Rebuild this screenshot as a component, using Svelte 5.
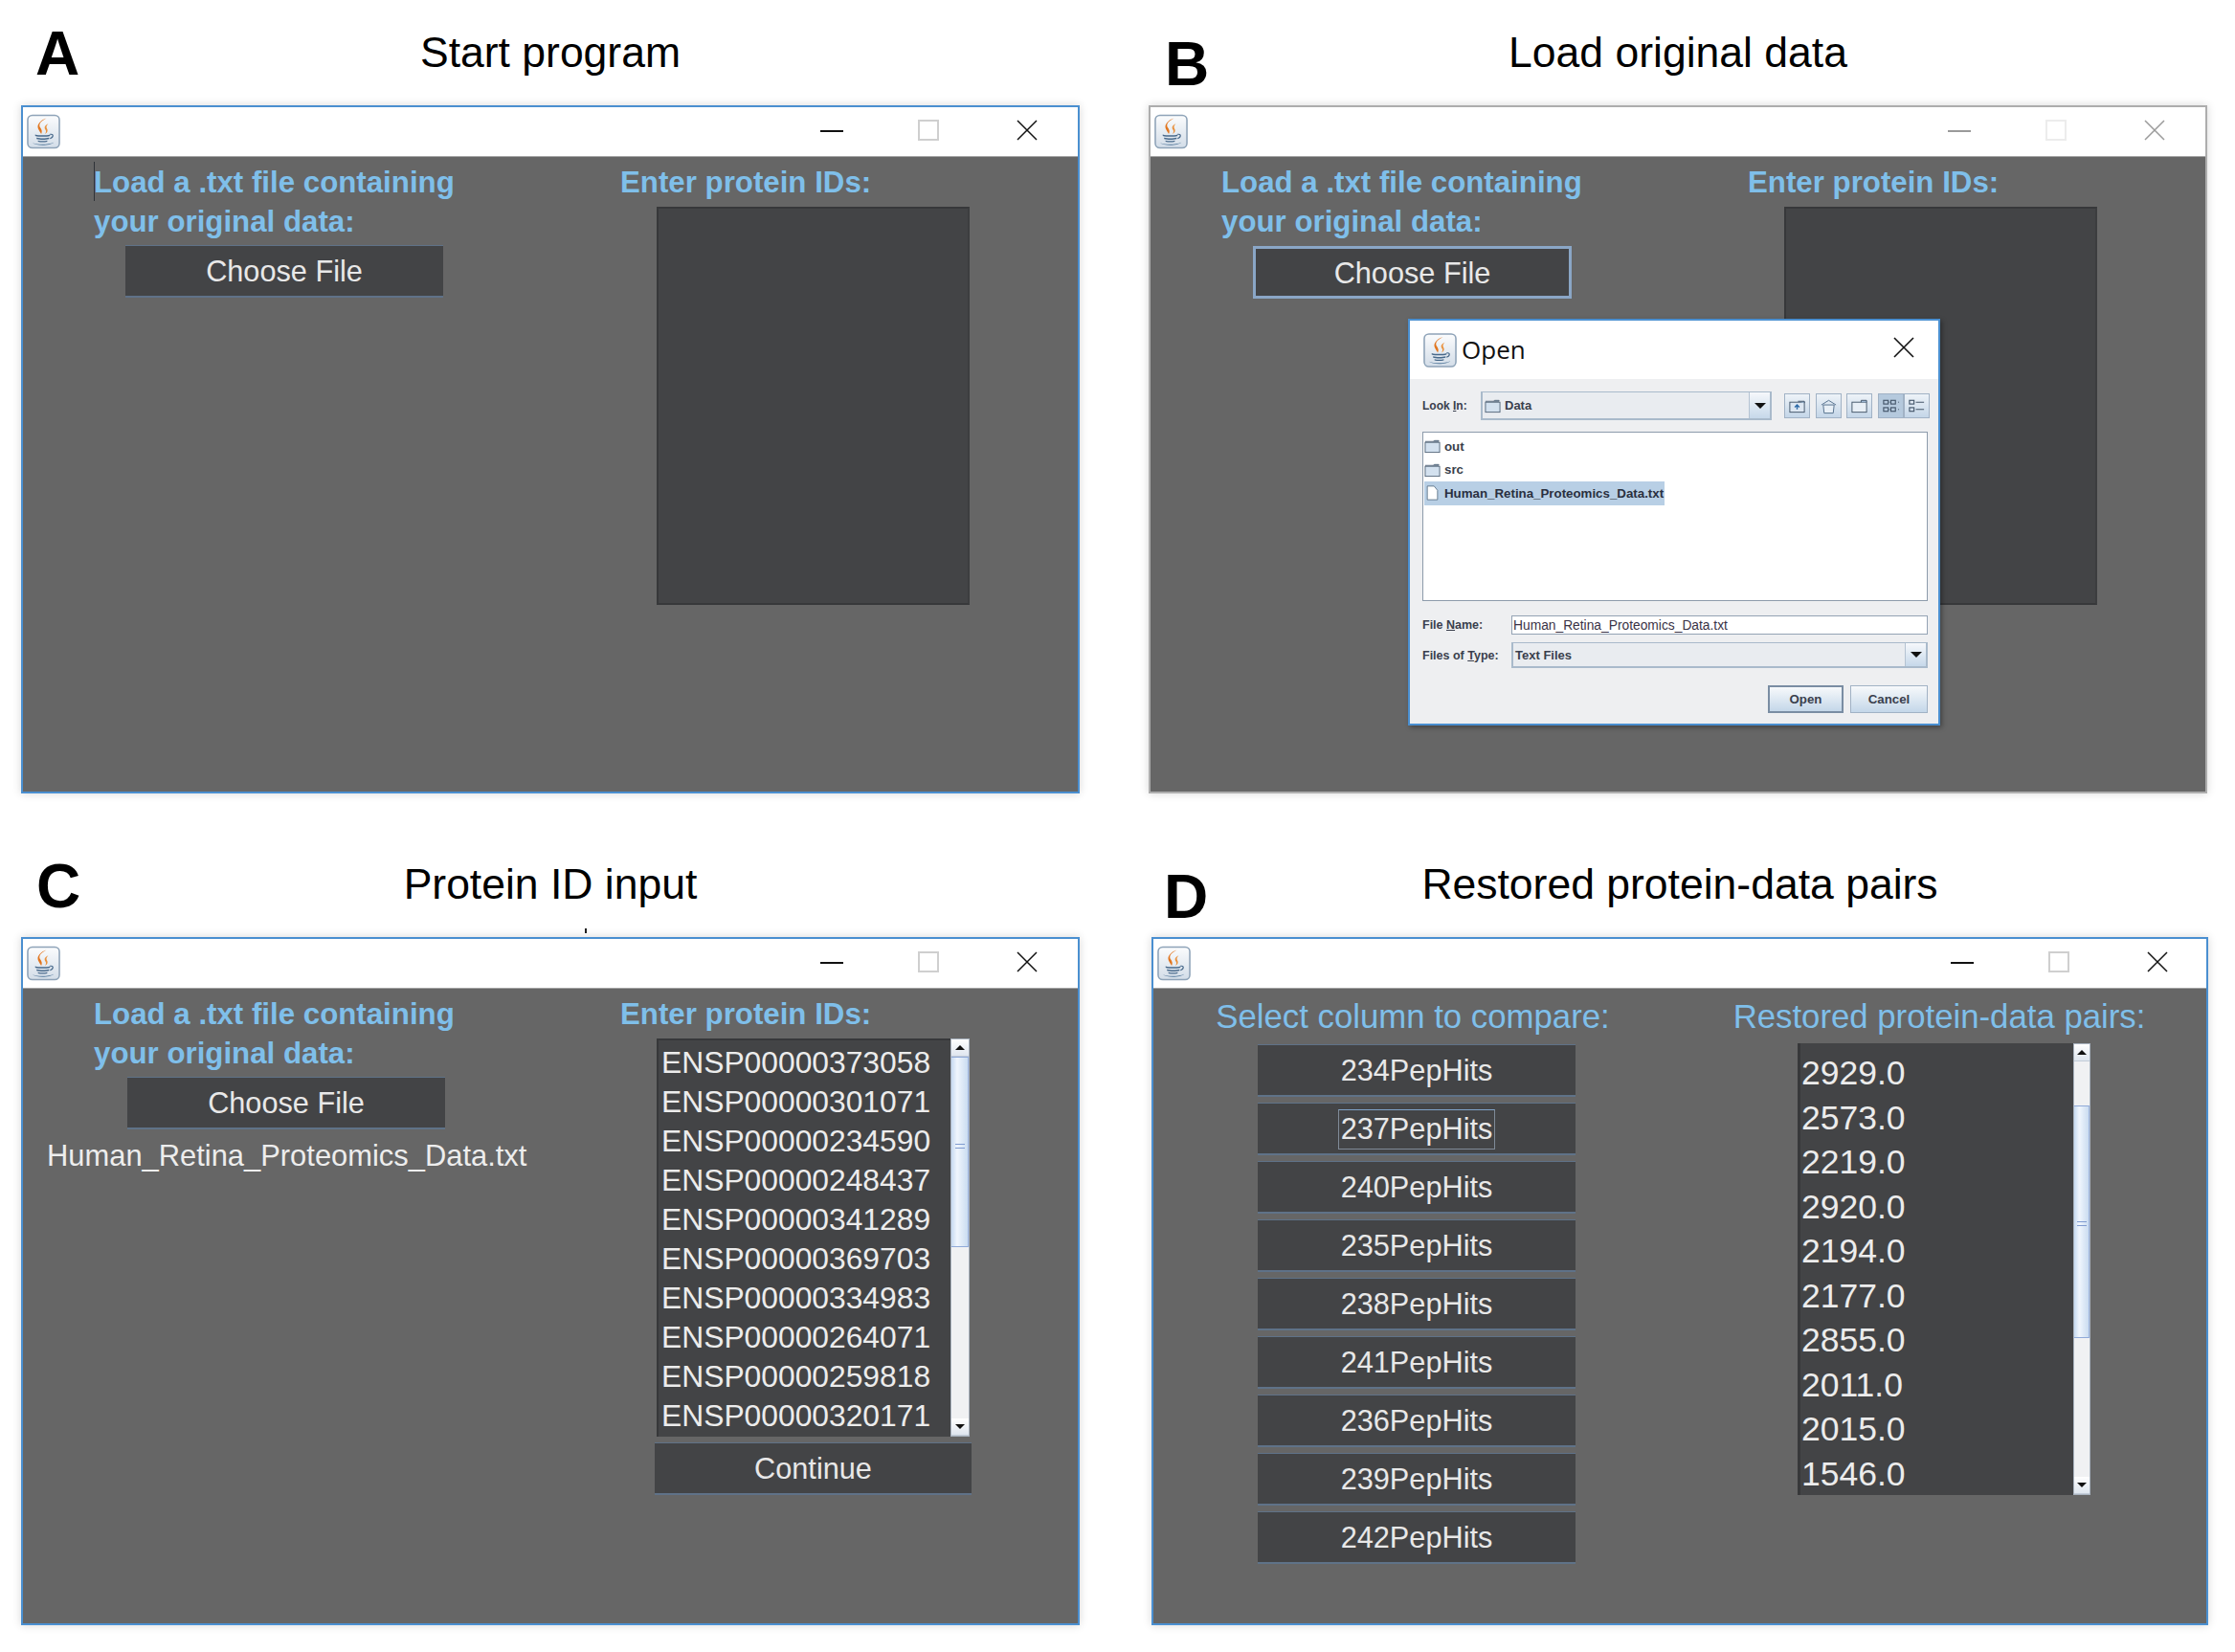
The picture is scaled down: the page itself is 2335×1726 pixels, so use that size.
<script>
	const proteinIds = [
		'ENSP00000373058',
		'ENSP00000301071',
		'ENSP00000234590',
		'ENSP00000248437',
		'ENSP00000341289',
		'ENSP00000369703',
		'ENSP00000334983',
		'ENSP00000264071',
		'ENSP00000259818',
		'ENSP00000320171'
	];
	const restored = ['2929.0', '2573.0', '2219.0', '2920.0', '2194.0', '2177.0', '2855.0', '2011.0', '2015.0', '1546.0'];
	const columns = ['234', '237', '240', '235', '238', '241', '236', '239', '242'];
	const focusedColumn = '237';
</script>

{#snippet javaIcon(cls)}
	<svg class={cls} viewBox="0 0 36 37" aria-hidden="true">
		<defs>
			<linearGradient id="jv-{cls}" x1="0" y1="0" x2="0" y2="1">
				<stop offset="0" stop-color="#fbfcfd" />
				<stop offset="1" stop-color="#d3dde8" />
			</linearGradient>
		</defs>
		<rect x="1" y="1" width="34" height="35" rx="5" fill="url(#jv-{cls})" stroke="#8ea3b8" stroke-width="1.6" />
		<path d="M21 4c-7 4-9 7-6 11 1.500 2.500 1.500 4 .5 6-2-4-6-7-2-12 1.500-2 4-4 7.500-5z" fill="#e2761f" />
		<path d="M23 10c-4 2-4.500 4-3 6.500 1 1.500.8 3-.5 4.500 3-1.500 3.500-3.500 2-6-1-1.500 0-3.500 1.500-5z" fill="#e9923f" />
		<path d="M9 21.500c4 1.300 12 1.300 16 0v1.500c-4 1.300-12 1.300-16 0zM10.500 25c3.500 1 10 1 13.500 0v1.400c-3.500 1-10 1-13.500 0zM12 28c3 .8 7 .8 10 0v1.300c-3 .8-7 .8-10 0z" fill="#47688a" />
		<path d="M25 21.500c3.500-1 4.500 2.500 0 4.500" fill="none" stroke="#47688a" stroke-width="1.200" />
		<path d="M6 30.500c6 2.200 17 2.200 23-.5-4 4-19 4-23 .5z" fill="#557a9c" />
	</svg>
{/snippet}

{#snippet titleBar(inactive)}
	<div class="titlebar" class:inactive>
		{@render javaIcon('app-icon')}
		<svg class="ctl min" viewBox="0 0 24 22" aria-hidden="true"><path d="M0 11h24" /></svg>
		<svg class="ctl max" viewBox="0 0 22 22" aria-hidden="true"><rect x="1" y="1" width="20" height="20" /></svg>
		<svg class="ctl close" viewBox="0 0 22 22" aria-hidden="true"><path d="M1 1l20 20M21 1L1 21" /></svg>
	</div>
{/snippet}

{#snippet scrollbar(thumbTop, thumbHeight, gripTop)}
	<div class="scrollbar">
		<div class="sb-btn"><span class="tri up"></span></div>
		<div class="sb-track">
			<div class="sb-thumb" style="margin-top:{thumbTop}px;height:{thumbHeight}px">
				<span class="sb-grip" style="margin-top:{gripTop}px"></span>
			</div>
		</div>
		<div class="sb-btn"><span class="tri down"></span></div>
	</div>
{/snippet}

{#snippet folder()}
	<svg class="tiny" viewBox="0 0 18 16" aria-hidden="true">
		<path d="M1 3h15v-1h-5l-1 1" fill="#b9cfe6" stroke="#56687b" />
		<rect x="1" y="4" width="16" height="11" fill="#d3e1ef" stroke="#56687b" />
	</svg>
{/snippet}

{#snippet loadColumn(cls)}
	<p class="label bold">Load a .txt file containing<br />your original data:</p>
	<button class="btn choose {cls}">Choose File</button>
{/snippet}

<main class="figure">
	<section class="panel">
		<header class="head">
			<span class="letter la">A</span>
			<h2>Start program</h2>
		</header>
		<div class="window">
			{@render titleBar(false)}
			<div class="body split">
				<div class="col-left">
					<span class="caret"></span>
					{@render loadColumn('')}
				</div>
				<div class="col-right">
					<p class="label bold">Enter protein IDs:</p>
					<div class="area empty"></div>
				</div>
			</div>
		</div>
	</section>

	<section class="panel">
		<header class="head">
			<span class="letter lb">B</span>
			<h2>Load original data</h2>
		</header>
		<div class="window inactive">
			{@render titleBar(true)}
			<div class="body split">
				<div class="col-left">
					{@render loadColumn('focused')}
				</div>
				<div class="col-right">
					<p class="label bold">Enter protein IDs:</p>
					<div class="area empty"></div>
				</div>
			</div>

			<div class="dialog">
				<div class="dlg-title">
					{@render javaIcon('dlg-icon')}
					<span class="dlg-name">Open</span>
					<svg class="dlg-close" viewBox="0 0 22 22" aria-hidden="true"><path d="M1 1l20 20M21 1L1 21" /></svg>
				</div>
				<div class="dlg-content">
					<div class="look-row">
						<span class="dlg-label look">Look <u>I</u>n:</span>
						<div class="combo look-combo">
							<span class="combo-value">{@render folder()} Data</span>
							<span class="combo-arrow"><span class="tri down big"></span></span>
						</div>
						<div class="tools">
							<button class="tool" aria-label="Up one level">
								<svg viewBox="0 0 20 18"><rect x="2" y="5" width="16" height="11" fill="#dde7f2" stroke="#44566a" /><path d="M10 13V8M7.500 10.500L10 8l2.500 2.500" fill="none" stroke="#2d6aa8" stroke-width="1.500" /><path d="M11 4h7v2" fill="#9db8d4" stroke="#44566a" /></svg>
							</button>
							<button class="tool" aria-label="Home">
								<svg viewBox="0 0 20 18"><path d="M2 8l8-5 8 5" fill="#dde7f2" stroke="#54708c" /><path d="M4 8h12l-1 9H5z" fill="#e8eff6" stroke="#54708c" /></svg>
							</button>
							<button class="tool" aria-label="New folder">
								<svg viewBox="0 0 20 18"><rect x="2" y="5" width="16" height="11" fill="#e8eff6" stroke="#44566a" /><path d="M12 5V3h6v2" fill="#9db8d4" stroke="#44566a" /></svg>
							</button>
							<div class="toggle">
								<button class="tool on" aria-label="List">
									<svg viewBox="0 0 20 18"><g fill="none" stroke="#44566a" stroke-width="1.200"><rect x="2" y="3" width="5" height="4" /><rect x="10" y="3" width="5" height="4" /><rect x="2" y="11" width="5" height="4" /><rect x="10" y="11" width="5" height="4" /></g><path d="M18 5h1M18 13h1M8 5h1M8 13h1" stroke="#44566a" /></svg>
								</button>
								<button class="tool" aria-label="Details">
									<svg viewBox="0 0 20 18"><g fill="none" stroke="#44566a" stroke-width="1.200"><rect x="2" y="3" width="5" height="4" /><rect x="2" y="11" width="5" height="4" /><path d="M9 5h9M9 13h9" /></g></svg>
								</button>
							</div>
						</div>
					</div>

					<div class="file-list">
						<div class="file-row">{@render folder()}<span>out</span></div>
						<div class="file-row">{@render folder()}<span>src</span></div>
						<div class="file-row selected">
							<svg class="tiny" viewBox="0 0 18 18" aria-hidden="true"><path d="M3 1h8l4 5v11H3z" fill="#fff" stroke="#5f7488" /></svg>
							<span>Human_Retina_Proteomics_Data.txt</span>
						</div>
					</div>

					<div class="name-row">
						<span class="dlg-label wide">File <u>N</u>ame:</span>
						<div class="name-input">Human_Retina_Proteomics_Data.txt</div>
					</div>
					<div class="type-row">
						<span class="dlg-label wide">Files of <u>T</u>ype:</span>
						<div class="combo type-combo">
							<span class="combo-value">Text Files</span>
							<span class="combo-arrow"><span class="tri down big"></span></span>
						</div>
					</div>
					<div class="dlg-actions">
						<button class="dlg-btn default">Open</button>
						<button class="dlg-btn">Cancel</button>
					</div>
				</div>
			</div>
		</div>
	</section>

	<section class="panel">
		<header class="head">
			<span class="letter lc">C</span>
			<h2>Protein ID input</h2>
			<span class="tick"></span>
		</header>
		<div class="window">
			{@render titleBar(false)}
			<div class="body split">
				<div class="col-left shift">
					{@render loadColumn('')}
					<p class="file-chosen">Human_Retina_Proteomics_Data.txt</p>
				</div>
				<div class="col-right">
					<p class="label bold">Enter protein IDs:</p>
					<div class="area with-scroll">
						<ul class="rows ids">
							{#each proteinIds as id}
								<li>{id}</li>
							{/each}
						</ul>
						{@render scrollbar(0, 199, 90)}
					</div>
					<button class="btn continue">Continue</button>
				</div>
			</div>
		</div>
	</section>

	<section class="panel last">
		<header class="head">
			<span class="letter ld">D</span>
			<h2>Restored protein-data pairs</h2>
		</header>
		<div class="window">
			{@render titleBar(false)}
			<div class="body pairs">
				<div class="pair-col">
					<p class="label large">Select column to compare:</p>
					<div class="col-buttons">
						{#each columns as c}
							<button class="btn column">
								<span class:focus-ring={c === focusedColumn}>{c}PepHits</span>
							</button>
						{/each}
					</div>
				</div>
				<div class="pair-col">
					<p class="label large">Restored protein-data pairs:</p>
					<div class="area with-scroll values">
						<ul class="rows vals">
							{#each restored as v}
								<li>{v}</li>
							{/each}
						</ul>
						{@render scrollbar(46, 243, 120)}
					</div>
				</div>
			</div>
		</div>
	</section>
</main>

<style>
	:global(body) {
		margin: 0;
		background: #fff;
	}

	.figure {
		width: 2335px;
		height: 1726px;
		box-sizing: border-box;
		padding-left: 22px;
		display: grid;
		grid-template-columns: 1106px 1106px;
		grid-template-rows: 829px 829px;
		column-gap: 72px;
		row-gap: 40px;
		font-family: 'Liberation Sans', Arial, sans-serif;
	}

	.panel.last {
		margin-left: 3px;
		margin-right: -1px;
	}

	.head {
		position: relative;
		height: 110px;
		display: grid;
		color: #000;
	}

	.letter,
	.head h2 {
		grid-area: 1 / 1;
	}

	.letter {
		justify-self: start;
		align-self: start;
		font-size: 64px;
		line-height: 1;
		font-weight: 700;
	}

	.la { margin: 24px 0 0 15px; }
	.lb { margin: 35px 0 0 17px; }
	.lc { margin: 25px 0 0 16px; }
	.ld { margin: 36px 0 0 13px; }

	.head h2 {
		justify-self: center;
		align-self: center;
		margin: 1px 0 0;
		font-size: 44.5px;
		font-weight: 400;
		line-height: 1;
	}

	.tick {
		position: absolute;
		left: 589px;
		top: 101px;
		width: 2px;
		height: 5px;
		background: #222;
	}

	.window {
		position: relative;
		height: 719px;
		box-sizing: border-box;
		border: 2px solid #4a8fd0;
		box-shadow: 0 0 9px rgba(0, 0, 0, 0.16);
		display: flex;
		flex-direction: column;
		background: #666;
	}

	.window.inactive {
		border: 2px solid #adadad;
	}

	.titlebar {
		height: 51px;
		flex: none;
		background: #fff;
		border-bottom: 1px solid #a5a5a5;
		display: flex;
		align-items: center;
		position: relative;
	}

	:global(.app-icon) {
		width: 35px;
		height: 37px;
		margin-left: 4px;
		flex: none;
	}

	.ctl {
		position: absolute;
		fill: none;
		stroke: #111;
		stroke-width: 1.5;
	}

	.ctl.min {
		left: 833px;
		top: 14px;
		width: 24px;
		height: 22px;
		stroke-width: 2;
	}

	.ctl.max {
		left: 935px;
		top: 13px;
		width: 22px;
		height: 22px;
		stroke: #cfcfcf;
		stroke-width: 2;
	}

	.ctl.close {
		left: 1038px;
		top: 13px;
		width: 22px;
		height: 22px;
	}

	.titlebar.inactive .ctl {
		stroke: #9a9a9a;
	}

	.titlebar.inactive .ctl.max {
		stroke: #ececec;
	}

	.body {
		flex: 1;
		color: #e8e8e8;
	}

	.split {
		display: grid;
		grid-template-columns: 624px 1fr;
	}

	.col-left {
		position: relative;
		padding: 6px 0 0 74px;
	}

	.col-left.shift .btn {
		margin-left: 35px;
	}

	.col-right {
		padding-top: 6px;
	}

	.label {
		margin: 0;
		color: #7fbfea;
		white-space: nowrap;
	}

	.label.bold {
		font-size: 31.25px;
		line-height: 41px;
		font-weight: 700;
	}

	.label.large {
		margin-left: -4px;
		font-size: 34.75px;
		line-height: 41px;
		text-align: center;
	}

	.caret {
		position: absolute;
		left: 74px;
		top: 5px;
		width: 1px;
		height: 41px;
		background: #2f3338;
	}

	.btn {
		display: block;
		padding: 2px 0 0;
		box-sizing: border-box;
		height: 55px;
		font-family: inherit;
		font-size: 30.7px;
		color: #e8e8e8;
		background: #434446;
		border: 0;
		border-top: 1px solid #5f7288;
		border-bottom: 2px solid #5f7288;
	}

	.btn.choose {
		width: 332px;
		margin: 4px 0 0 33px;
	}

	.btn.choose.focused {
		width: 333px;
		margin-top: 5px;
		border: 3px solid #8aa6c6;
	}

	.file-chosen {
		margin: 9px 0 0 -49px;
		font-size: 30.9px;
		line-height: 37px;
		color: #ededed;
		white-space: nowrap;
	}

	.area {
		margin: 5px 0 0 38px;
		width: 327px;
		height: 416px;
		box-sizing: border-box;
		background: #434446;
	}

	.area.empty {
		border: 2px solid #37383a;
		border-right-color: #3c3d3f;
	}

	.with-scroll {
		display: flex;
		overflow: hidden;
	}

	.rows {
		list-style: none;
		margin: 0;
		flex: 1;
		color: #ececec;
	}

	.rows.ids {
		padding: 3px 0 0 3px;
		font-size: 31.8px;
		line-height: 41px;
		border-top: 2px solid #37383a;
		border-left: 2px solid #37383a;
	}

	.rows.vals {
		padding: 8px 0 0 1px;
		font-size: 35.5px;
		line-height: 46.5px;
		border-left: 3px solid #37383a;
	}

	.scrollbar {
		width: 20px;
		flex: none;
		display: flex;
		flex-direction: column;
		background: #f0f1f3;
		border: 1px solid #a9b3bf;
		box-sizing: border-box;
	}

	.sb-btn {
		height: 17px;
		flex: none;
		display: flex;
		align-items: center;
		justify-content: center;
		background: linear-gradient(#fff, #dfe6ef);
		border-bottom: 1px solid #c3ccd8;
	}

	.sb-track {
		flex: 1;
		min-height: 0;
	}

	.sb-thumb {
		box-sizing: border-box;
		background: linear-gradient(90deg, #c7daf1, #f0f6fd 35%, #cadcf0);
		border-top: 1px solid #8fa9d8;
		border-bottom: 1px solid #8fa9d8;
		border-right: 1px solid #9db5df;
		display: flex;
		justify-content: center;
		align-items: flex-start;
	}

	.sb-grip {
		width: 10px;
		height: 3px;
		border-top: 1px solid #7f9bd0;
		border-bottom: 1px solid #7f9bd0;
	}

	.tri {
		width: 0;
		height: 0;
		border-left: 5px solid transparent;
		border-right: 5px solid transparent;
	}

	.tri.up {
		border-bottom: 5px solid #111;
	}

	.tri.down {
		border-top: 5px solid #111;
	}

	.tri.big {
		border-left-width: 6px;
		border-right-width: 6px;
		border-top-width: 6px;
	}

	.btn.continue {
		width: 331px;
		margin: 6px 0 0 36px;
	}

	.pairs {
		display: grid;
		grid-template-columns: 546px 1fr;
		padding-top: 9px;
	}

	.pair-col {
		display: flex;
		flex-direction: column;
		align-items: center;
	}

	.col-buttons {
		display: flex;
		flex-direction: column;
		gap: 6px;
		margin: 8px 0 0 4px;
	}

	.btn.column {
		width: 332px;
		display: flex;
		align-items: center;
		justify-content: center;
	}

	.focus-ring {
		display: block;
		width: 164px;
		height: 42px;
		line-height: 40px;
		box-sizing: border-box;
		border: 1px solid #7f8a97;
		border-top-color: #7fa3c8;
	}

	.area.values {
		margin: 7px 0 0 6px;
		width: 306px;
		height: 472px;
	}

	.area.values .scrollbar {
		width: 18px;
	}

	.dialog {
		position: absolute;
		left: 269px;
		top: 221px;
		width: 556px;
		height: 425px;
		box-sizing: border-box;
		border: 2px solid #4a8fd0;
		box-shadow: 2px 2px 5px rgba(0, 0, 0, 0.35);
		display: flex;
		flex-direction: column;
		background: #eeeff1;
		color: #2c3140;
	}

	.dlg-title {
		height: 61px;
		flex: none;
		background: #fff;
		display: flex;
		align-items: center;
		padding-left: 14px;
	}

	:global(.dlg-icon) {
		width: 35px;
		height: 36px;
	}

	.dlg-name {
		margin: -2px 0 0 5px;
		font-family: 'Open Sans', sans-serif;
		font-size: 26px;
		color: #111;
	}

	.dlg-close {
		width: 22px;
		height: 22px;
		margin: -6px 25px 0 auto;
		fill: none;
		stroke: #111;
		stroke-width: 1.6;
	}

	.dlg-content {
		flex: 1;
		padding: 13px 11px 0 13px;
		font-size: 13px;
	}

	.look-row {
		display: flex;
		align-items: center;
		height: 30px;
	}

	.dlg-label {
		flex: none;
		font-weight: 700;
		font-size: 12.5px;
		color: #3a3f4d;
	}

	.dlg-label.look {
		width: 61px;
		font-size: 12px;
	}

	.dlg-label.wide {
		width: 93px;
	}

	.combo {
		display: flex;
		box-sizing: border-box;
		background: #e9ecf0;
		border: 2px solid #a9bacb;
		border-top-width: 1px;
	}

	.look-combo {
		width: 304px;
		height: 30px;
		flex: none;
	}

	.combo-value {
		flex: 1;
		display: flex;
		align-items: center;
		gap: 4px;
		padding-left: 2px;
		font-weight: 700;
		color: #3a3f4d;
	}

	.tiny {
		width: 17px;
		height: 16px;
		flex: none;
	}

	.combo-arrow {
		width: 21px;
		flex: none;
		display: flex;
		align-items: center;
		justify-content: center;
		background: linear-gradient(#f6f8fb, #c6d8ea);
		border-left: 1px solid #b5c3d2;
	}

	.tools {
		display: flex;
		gap: 5.5px;
		margin-left: 13px;
		flex: none;
	}

	.toggle {
		display: flex;
	}

	.tool {
		width: 27px;
		height: 26px;
		padding: 2px 3px;
		box-sizing: border-box;
		background: linear-gradient(#eef3f8, #c4d6e8);
		border: 1px solid #a1b2c5;
		display: block;
	}

	.tool svg {
		display: block;
		width: 100%;
		height: 100%;
	}

	.tool.on {
		background: #b5c9dd;
	}

	.file-list {
		margin-top: 12px;
		height: 177px;
		box-sizing: border-box;
		background: #fff;
		border: 1px solid #8d9bab;
		padding: 2px 1px;
		font-weight: 700;
		font-size: 13.3px;
	}

	.file-row {
		display: flex;
		align-items: center;
		gap: 4px;
		height: 24.5px;
		width: fit-content;
		padding-right: 1px;
		color: #3a3f4d;
	}

	.file-row.selected {
		background: #b8cfe5;
		color: #2a3040;
	}

	.name-row {
		display: flex;
		align-items: center;
		margin-top: 14px;
		height: 21px;
	}

	.name-input {
		flex: 1;
		height: 20px;
		line-height: 19px;
		box-sizing: border-box;
		padding-left: 1px;
		background: #fff;
		border: 1px solid #94a3b4;
		font-size: 13.8px;
		color: #3a3346;
	}

	.type-row {
		display: flex;
		align-items: center;
		margin-top: 8px;
		height: 27px;
	}

	.type-combo {
		flex: 1;
		height: 27px;
	}

	.dlg-actions {
		display: flex;
		justify-content: flex-end;
		gap: 7px;
		margin-top: 18px;
	}

	.dlg-btn {
		width: 81px;
		height: 29px;
		padding: 0;
		box-sizing: border-box;
		font-family: inherit;
		font-size: 13.3px;
		font-weight: 700;
		color: #3a3f4d;
		background: linear-gradient(#f7f9fb, #c4d7e9);
		border: 1px solid #a1b2c5;
	}

	.dlg-btn.default {
		width: 79px;
		border: 2px solid #7a8da3;
	}
</style>
